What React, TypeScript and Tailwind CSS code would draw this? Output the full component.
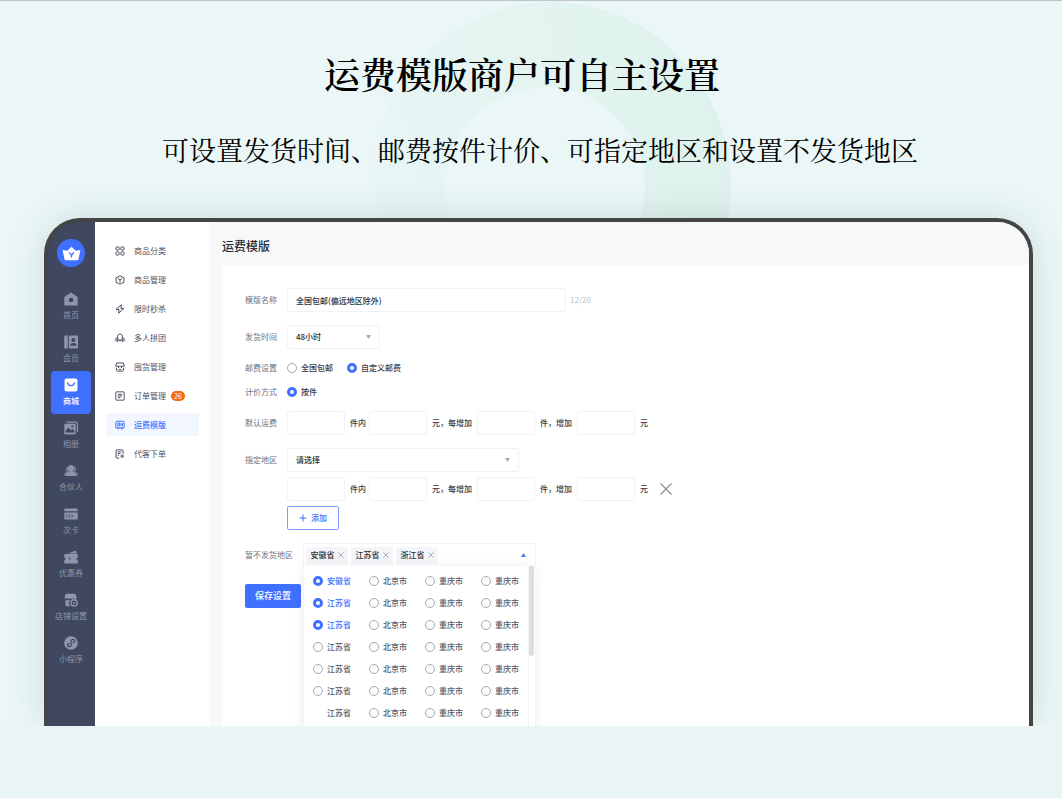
import React from "react";

type Item = { label: string; icon: React.ReactNode; active?: boolean; badge?: string };

const DARK = "#3f485f";

const navItems: Item[] = [
  {
    label: "首页",
    icon: (
      <>
        <path d="M7 .4 13.700 5v7.400a1.200 1.200 0 0 1-1.200 1.200h-11A1.200 1.200 0 0 1 .3 12.400V5z" fill="currentColor" />
        <circle cx="7" cy="8" r="2.300" fill={DARK} />
      </>
    ),
  },
  {
    label: "会员",
    icon: (
      <>
        <path d="M1.400.4h2.400v13.200H1.400A1.200 1.200 0 0 1 .2 12.400V1.600A1.200 1.200 0 0 1 1.400.4z" fill="currentColor" />
        <rect x="4.800" y=".4" width="9.200" height="13.200" rx="1.300" fill="currentColor" />
        <circle cx="9.400" cy="5" r="2" fill={DARK} />
        <path d="M6.200 10.800c0-2 1.200-2.900 3.200-2.900s3.200.9 3.200 2.900z" fill={DARK} />
      </>
    ),
  },
  {
    label: "商城",
    active: true,
    icon: (
      <>
        <rect x=".5" y=".5" width="13" height="13" rx="2" fill="#fff" />
        <path d="M3.600 4.800c.5 1.900 1.800 2.900 3.400 2.900s2.900-1 3.400-2.900" fill="none" stroke="#4070ff" strokeWidth="1.300" strokeLinecap="round" />
      </>
    ),
  },
  {
    label: "相册",
    icon: (
      <>
        <path d="M2.500 1.100h9.400a1.500 1.500 0 0 1 1.500 1.500v8.500" fill="none" stroke="currentColor" strokeWidth="1.200" />
        <rect x=".3" y="2.800" width="11.400" height="10.800" rx="1.400" fill="currentColor" />
        <path d="M1.600 11.500V9.700l2.900-3 2.500 2.600 1.500-1.500 1.900 2v1.700z" fill={DARK} />
        <circle cx="8.400" cy="5.600" r="1" fill={DARK} />
      </>
    ),
  },
  {
    label: "合伙人",
    icon: (
      <>
        <path d="M10 2.500c1.500 0 2.200 1 2.200 2.300 0 1-.4 1.800-.9 2.300 0 .8 2.600 1.600 2.600 4.300H9z" fill="currentColor" opacity=".7" />
        <path d="M4 2.500c-1.500 0-2.200 1-2.200 2.300 0 1 .4 1.800.9 2.300 0 .8-2.600 1.600-2.600 4.300H5z" fill="currentColor" opacity=".7" />
        <path d="M7 1c2 0 3 1.300 3 3.100 0 1.400-.6 2.500-1.300 3.200 0 1.200 3.500 1.800 3.500 4.800H1.800c0-3 3.500-3.600 3.500-4.800C4.600 6.600 4 5.500 4 4.100 4 2.300 5 1 7 1z" fill="currentColor" />
      </>
    ),
  },
  {
    label: "次卡",
    icon: (
      <>
        <path d="M1.500 1.500h11a1.200 1.200 0 0 1 1.200 1.200v1.500H.3V2.700a1.200 1.200 0 0 1 1.200-1.200zM.3 5.400h13.400v6a1.200 1.200 0 0 1-1.200 1.200h-11A1.200 1.200 0 0 1 .3 11.400z" fill="currentColor" />
        <path d="m2 7.300 1.400 1.600L2 10.500M4.700 7.300l1.400 1.600-1.400 1.600M7.400 7.300l1.400 1.600-1.400 1.600" fill="none" stroke={DARK} strokeWidth=".9" />
      </>
    ),
  },
  {
    label: "优惠券",
    icon: (
      <>
        <path d="m4 3.400 7-2.700a1 1 0 0 1 1.200.6l.8 2.100z" fill="currentColor" />
        <path d="M1 4h12a.8.8 0 0 1 .8.800v2.600a1.200 1.200 0 0 0 0 2.600v2.600a.8.8 0 0 1-.8.800H1a.8.8 0 0 1-.8-.8V10a1.200 1.200 0 0 0 0-2.600V4.800A.8.8 0 0 1 1 4z" fill="currentColor" />
        <path d="m5 7.300 1.500 1.400L5 10.100" fill="none" stroke={DARK} strokeWidth="1" />
      </>
    ),
  },
  {
    label: "店铺设置",
    icon: (
      <>
        <path d="M2.800.8h7.800a1.500 1.500 0 0 1 1.300.9l.9 2.800a1.700 1.700 0 0 1-3.200.5 1.700 1.700 0 0 1-3 0 1.700 1.700 0 0 1-3 0A1.700 1.700 0 0 1 .5 4.500l1-2.800A1.500 1.500 0 0 1 2.800.8z" fill="currentColor" />
        <path d="M1.500 7.200h4.600a4.500 4.500 0 0 0 .2 6H2.300a.8.800 0 0 1-.8-.8z" fill="currentColor" />
        <circle cx="10" cy="9.900" r="3.100" fill="none" stroke="currentColor" strokeWidth="1.400" />
        <circle cx="10" cy="9.900" r="1" fill="currentColor" />
      </>
    ),
  },
  {
    label: "小程序",
    icon: (
      <>
        <circle cx="7" cy="7" r="6.800" fill="currentColor" />
        <path d="M9 6.700c1-.2 1.700-.9 1.700-1.800S9.900 3.400 8.900 3.400 7.100 4.100 7.100 5v4c0 .9-.9 1.600-1.900 1.600S3.400 9.900 3.400 9s.7-1.500 1.600-1.700" fill="none" stroke={DARK} strokeWidth="1.200" strokeLinecap="round" />
      </>
    ),
  },
];

const subItems: Item[] = [
  {
    label: "商品分类",
    icon: (
      <>
        <rect x="1" y="1" width="4" height="4" rx="1.500" />
        <rect x="7" y="1" width="4" height="4" rx="1.500" />
        <rect x="1" y="7" width="4" height="4" rx="1.500" />
        <rect x="7" y="7" width="4" height="4" rx="1.500" />
      </>
    ),
  },
  { label: "商品管理", icon: <path d="M6 1 10.800 3.300v5.400L6 11 1.200 8.700V3.300zM3.400 4.300 6 5.600l2.600-1.300M6 5.600V9" strokeLinejoin="round" /> },
  { label: "限时秒杀", icon: <path d="M7.600 1 1.200 6.600h3.600L4.200 11l6.600-5.700H7.100z" strokeLinejoin="round" /> },
  {
    label: "多人拼团",
    icon: (
      <path d="M3.200 10.800V5a2.800 2.800 0 0 1 .3-2.500 3 3 0 0 1 5 0A2.800 2.800 0 0 1 8.800 5v5.800M3.200 5C1.700 5.400.9 6.500.9 8v1.300h2.300M8.800 5c1.500.4 2.300 1.500 2.300 3v1.300H8.800M3.200 7.600h1.600v1.600h2.400V7.600h1.600" />
    ),
  },
  {
    label: "囤货管理",
    icon: (
      <>
        <path d="M2 1.200h8l.9 2.400v1.500H1.100V3.600z" strokeLinejoin="round" />
        <path d="M1.800 7v3a1 1 0 0 0 1 1h6.400a1 1 0 0 0 1-1V7M4.200 5.100v2.300M7.800 5.100v2.300M4.500 9h3" />
      </>
    ),
  },
  {
    label: "订单管理",
    badge: "26",
    icon: (
      <>
        <rect x="1" y="1" width="10" height="10" rx="1" />
        <path d="M3.500 4h5M3.500 6h5M3.500 8h3" />
      </>
    ),
  },
  {
    label: "运费模版",
    active: true,
    icon: (
      <>
        <path d="M2.300 9.300H1V3a1.500 1.500 0 0 1 1.500-1.500h7A1.500 1.500 0 0 1 11 3v6.300H9.700M5 9.300h2" />
        <path d="M3.300 3.800h2.300v3.200H3.300zM7.200 3.800v3.400M9 3.800v3.400" />
        <circle cx="3.700" cy="9.800" r="1" />
        <circle cx="8.300" cy="9.800" r="1" />
      </>
    ),
  },
  {
    label: "代客下单",
    icon: (
      <>
        <path d="M5 11H2.300a1 1 0 0 1-1-1V2a1 1 0 0 1 1-1h6.400a1 1 0 0 1 1 1v3.500M3.300 3.500h4.400M3.300 5.500h3M3.300 7.500h1.500" />
        <path d="M8.600 6.200v4.800M6.200 8.600h4.800M7 6.900l3.300 3.400M10.300 6.900 7 10.300" strokeWidth=".8" />
      </>
    ),
  },
];

const fieldClass =
  "h-6 rounded-xs border border-[#f1f2f5] bg-white text-[8px] font-medium text-[#2d2f36] outline-none";
const radioClass =
  "size-[10px] shrink-0 appearance-none rounded-full border border-[#a2a6b4] bg-white checked:border-[3px] checked:border-[#4070ff]";

function Cross({ className }: { className: string }) {
  return (
    <svg viewBox="0 0 12 12" className={className} fill="none" stroke="currentColor" strokeWidth="1.200" aria-hidden="true">
      <path d="M.5.5l11 11M11.500.5l-11 11" />
    </svg>
  );
}

function Row({ label, htmlFor, className, children }: { label: string; htmlFor?: string; className: string; children: React.ReactNode }) {
  return (
    <div className={"flex items-center " + className}>
      <label htmlFor={htmlFor} className="w-[42px] shrink-0 text-[#6b7080]">
        {label}
      </label>
      {children}
    </div>
  );
}

function Select({ id, className, value }: { id: string; className: string; value: string }) {
  return (
    <div className={"relative " + className}>
      <select id={id} className={fieldClass + " w-full appearance-none px-2"}>
        <option>{value}</option>
      </select>
      <svg viewBox="0 0 6 5" className="pointer-events-none absolute top-[10px] right-[9px] h-1 w-[5px] fill-[#a4a8b3]" aria-hidden="true">
        <path d="M0 0h6L3 5z" />
      </svg>
    </div>
  );
}

function FeeFields({ id }: { id: string }) {
  const box = fieldClass + " w-[58px] px-2";
  return (
    <div className="flex items-center font-medium text-[#3a3d47]">
      <input id={id} aria-label="件内" className={box} />
      <span className="w-6 pl-[5px]">件内</span>
      <input aria-label="元" className={box} />
      <span className="w-[50px] pl-[5px]">元，每增加</span>
      <input aria-label="每增加件" className={box} />
      <span className="w-[42px] pl-[5px]">件，增加</span>
      <input aria-label="增加元" className={box} />
      <span className="pl-[5px]">元</span>
    </div>
  );
}

function Regions() {
  const rows = ["安徽省", "江苏省", "江苏省", "江苏省", "江苏省", "江苏省", "江苏省"];
  return (
    <div className="absolute top-full left-0 z-10 flex w-full bg-white shadow-[0_2px_10px_rgba(60,70,100,0.12)]">
      <div className="flex-1 pt-1 pb-4 pl-[9px]">
        {rows.map((first, r) => (
          <div key={r} className="grid h-[22px] grid-cols-[56px_56px_56px_46px] items-center">
            {[first, "北京市", "重庆市", "重庆市"].map((name, c) => {
              const on = c === 0 && r < 3;
              return (
                <label key={c} className={on ? "flex items-center gap-1 text-[#4070ff]" : "flex items-center gap-1 text-[#555a68]"}>
                  {r === 6 && c === 0 ? <span className="size-[10px]" /> : <input type="checkbox" defaultChecked={on} className={radioClass} />}
                  <span className="font-medium whitespace-nowrap">{name}</span>
                </label>
              );
            })}
          </div>
        ))}
      </div>
      <div className="w-[7px] border-l border-[#f4f5f7]">
        <div className="h-[90px] w-[5px] rounded-b-sm bg-[#dcdee4]" />
      </div>
    </div>
  );
}

export default function App() {
  return (
    <div
      lang="zh-CN"
      className="relative flex min-h-screen flex-col overflow-hidden border-t border-[#bcc6c6] bg-[#eaf7f6] font-['Noto_Sans_CJK_SC',sans-serif]"
    >
      <svg viewBox="0 0 360 360" className="absolute top-0 left-1/2 w-[360px] -translate-x-[160px]" aria-hidden="true">
        <defs>
          <linearGradient id="ring" x1="0" y1="0.600" x2="1" y2="0.400">
            <stop offset="0" stopColor="#d5eee6" stopOpacity="0.100" />
            <stop offset="1" stopColor="#d5eee6" stopOpacity="0.550" />
          </linearGradient>
        </defs>
        <path fillRule="evenodd" fill="url(#ring)" d="M180 1a180 184 0 0 1 0 368a180 184 0 0 1 0-368zM174 86a100 100 0 0 0 0 200a100 100 0 0 0 0-200z" />
      </svg>

      <header className="relative flex flex-col items-center whitespace-nowrap font-[SimSun,'Noto_Serif_CJK_SC','Noto_Sans_CJK_SC',serif] text-black">
        <h1 className="mt-[49px] pr-[18px] text-[36px] leading-[48px] font-semibold">运费模版商户可自主设置</h1>
        <p className="mt-[33px] pl-[18px] text-[27px] leading-[38px] font-normal">
          可设置发货时间、邮费按件计价、可指定地区和设置不发货地区
        </p>
      </header>

      <div className="relative mt-[49px] mr-[29px] ml-[44px] flex flex-1 overflow-hidden rounded-t-[36px] border-x-4 border-t-4 border-[#444545] bg-[linear-gradient(90deg,#3f485f_50%,#f7f8fa_50%)] text-[8px] leading-[12px] shadow-[0_0_36px_rgba(40,60,60,0.14)]">
        <nav aria-label="主导航" className="flex w-[47px] shrink-0 flex-col items-center bg-[#3f485f] pt-[17px] pr-px text-[#8f96a9]">
          <a href="#home" aria-label="主页" className="mb-[18px] flex size-7 items-center justify-center rounded-full bg-[#4070ff]">
            <svg viewBox="0 0 20 16" className="h-[15px] w-[19px]" aria-hidden="true">
              <path d="M.5 4.200 5.600 5 10 .8 14.400 5l5.100-.8-2 10a1.200 1.200 0 0 1-1.200 1H3.700a1.200 1.200 0 0 1-1.200-1z" fill="#fff" />
              <path d="m7.500 6.800 2.500 3 2.500-3M10 9.800v2.400" fill="none" stroke="#4070ff" strokeWidth="1.400" />
            </svg>
          </a>
          {navItems.map((item) => (
            <a
              key={item.label}
              href="#nav"
              className={
                item.active
                  ? "flex h-[43px] w-10 flex-col items-center gap-[3px] rounded-sm bg-[#4070ff] pt-[7px] font-medium whitespace-nowrap text-white"
                  : "flex h-[43px] w-10 flex-col items-center gap-[3px] pt-[7px] whitespace-nowrap"
              }
            >
              <svg viewBox="0 0 14 14" className="size-[14px] shrink-0" aria-hidden="true">
                {item.icon}
              </svg>
              {item.label}
            </a>
          ))}
        </nav>

        <nav aria-label="商城" className="flex w-[115px] shrink-0 flex-col gap-[6px] bg-white px-[11px] pt-[17px] text-[#4d5262]">
          {subItems.map((item) => (
            <a
              key={item.label}
              href="#sub"
              className={
                item.active
                  ? "flex h-[23px] items-center rounded-xs bg-[#f2f6ff] px-[9px] font-medium text-[#4070ff]"
                  : "flex h-[23px] items-center px-[9px]"
              }
            >
              <svg viewBox="0 0 12 12" className="mr-[9px] size-[10px]" fill="none" stroke="currentColor" strokeWidth="1.200" aria-hidden="true">
                {item.icon}
              </svg>
              {item.label}
              {item.badge && <span className="ml-[5px] rounded-full bg-[#f56a0a] px-[3px] text-[7px] leading-[10px] text-white">{item.badge}</span>}
            </a>
          ))}
        </nav>

        <main className="flex min-w-0 flex-1 flex-col bg-[#f7f8fa] pl-3">
          <h2 className="pt-4 pb-[11px] text-[12px] leading-4 font-medium text-[#2b2d33]">运费模版</h2>
          <form className="flex flex-1 flex-col bg-white pt-[23px] pl-[23px]" onSubmit={(e) => e.preventDefault()}>
            <Row label="模版名称" htmlFor="name" className="">
              <input id="name" defaultValue="全国包邮(偏远地区除外)" className={fieldClass + " w-[279px] px-2"} />
              <span className="pl-1 text-[#b9bdc9]">12/20</span>
            </Row>
            <Row label="发货时间" htmlFor="time" className="mt-[13px]">
              <Select id="time" className="w-[93px]" value="48小时" />
            </Row>
            <Row label="邮费设置" className="mt-[13px]">
              <div className="flex gap-[14px] font-medium text-[#3a3d47]">
                <label className="flex items-center gap-1">
                  <input type="radio" name="postage" className={radioClass} />
                  全国包邮
                </label>
                <label className="flex items-center gap-1">
                  <input type="radio" name="postage" defaultChecked className={radioClass} />
                  自定义邮费
                </label>
              </div>
            </Row>
            <Row label="计价方式" className="mt-3">
              <label className="flex items-center gap-1 font-medium text-[#3a3d47]">
                <input type="radio" name="pricing" defaultChecked className={radioClass} />
                按件
              </label>
            </Row>
            <Row label="默认运费" htmlFor="fee" className="mt-[13px]">
              <FeeFields id="fee" />
            </Row>
            <Row label="指定地区" htmlFor="area" className="mt-[13px]">
              <Select id="area" className="w-[232px]" value="请选择" />
            </Row>
            <div className="mt-[5px] flex items-center pl-[42px]">
              <FeeFields id="area-fee" />
              <button type="button" aria-label="删除" className="ml-3 text-[#8b8e96]">
                <Cross className="size-[12px]" />
              </button>
            </div>
            <div className="mt-[5px] flex pl-[42px]">
              <button type="button" className="flex h-6 w-[52px] items-center justify-center gap-1 rounded-xs border border-[#7c9bff] font-medium text-[#4070ff]">
                <svg viewBox="0 0 8 8" className="size-2" stroke="currentColor" strokeWidth="1" aria-hidden="true">
                  <path d="M4 .5v7M.5 4h7" />
                </svg>
                添加
              </button>
            </div>
            <div className="mt-[13px] flex items-center">
              <span className="w-[58px] shrink-0 text-[#6b7080]">暂不发货地区</span>
              <div className="relative flex h-6 w-[233px] items-center gap-[3px] border border-[#f1f2f5] pl-[2px]">
                {["安徽省", "江苏省", "浙江省"].map((tag) => (
                  <span key={tag} className="flex h-[17px] w-[42px] items-center justify-center gap-[3px] rounded-xs bg-[#f4f5f9] font-medium whitespace-nowrap text-[#2d2f36]">
                    {tag}
                    <button type="button" aria-label={"移除" + tag} className="text-[#7b7f8b]">
                      <Cross className="size-[6px]" />
                    </button>
                  </span>
                ))}
                <button type="button" aria-label="收起" className="mr-[9px] ml-auto">
                  <svg viewBox="0 0 6 5" className="h-1 w-[5px] fill-[#4070ff]" aria-hidden="true">
                    <path d="M0 5h6L3 0z" />
                  </svg>
                </button>
                <Regions />
              </div>
            </div>
            <button type="submit" className="mt-[17px] h-6 w-14 rounded-xs bg-[#4070ff] text-[9px] font-medium text-white">
              保存设置
            </button>
          </form>
        </main>
      </div>

      <footer className="relative h-[72px] bg-[#e9f6f5]" />
    </div>
  );
}
